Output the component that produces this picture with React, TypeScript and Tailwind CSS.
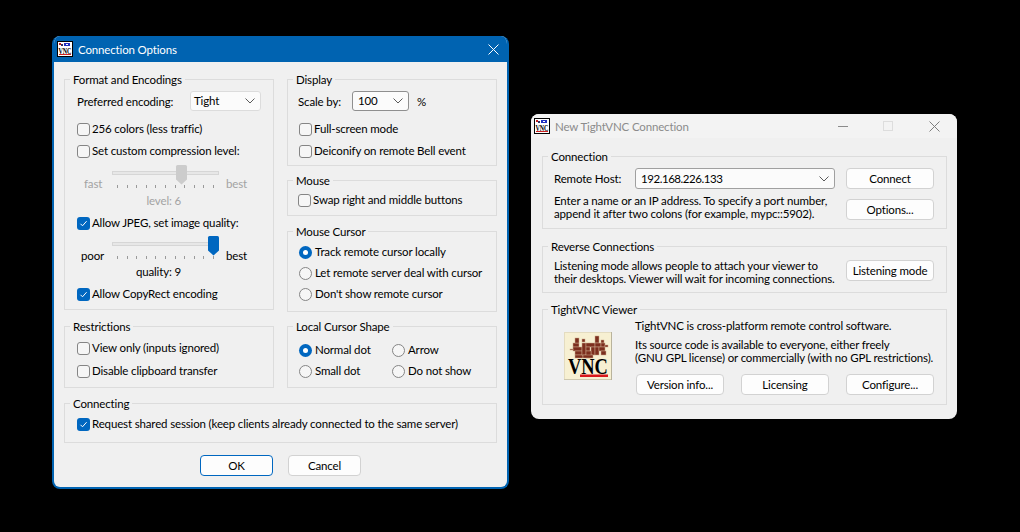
import React from "react";

function Group({ title, className, children }: { title: string; className: string; children?: React.ReactNode }) {
  return (
    <div className={"relative border border-[#dcdcdc] " + className}>
      <span className="absolute -top-[8px] left-[5px] bg-[#f0f0f0] px-[3px] leading-[16px] text-[#000]">{title}</span>
      {children}
    </div>
  );
}

function Check({ label, on, className = "" }: { label: string; on?: boolean; className?: string }) {
  return (
    <div className={"flex h-[20px] items-center gap-[2px] " + className}>
      {on ? (
        <span className="flex h-[13px] w-[13px] shrink-0 items-center justify-center rounded-[3px] bg-[#0067c0]">
          <svg width="9" height="9" viewBox="0 0 9 9" fill="none">
            <path d="M1.5 4.8 3.5 6.8 7.6 2.2" stroke="#ffffff" strokeWidth="1" />
          </svg>
        </span>
      ) : (
        <span className="h-[13px] w-[13px] shrink-0 rounded-[3px] border border-[#858585] bg-[#f6f6f6]" />
      )}
      <span className="whitespace-nowrap">{label}</span>
    </div>
  );
}

function Radio({ label, on, className = "" }: { label: string; on?: boolean; className?: string }) {
  return (
    <div className={"flex h-[20px] items-center gap-[3px] " + className}>
      {on ? (
        <span className="flex h-[13px] w-[13px] shrink-0 items-center justify-center rounded-full bg-[#0067c0]">
          <span className="h-[5px] w-[5px] rounded-full bg-white" />
        </span>
      ) : (
        <span className="h-[13px] w-[13px] shrink-0 rounded-full border border-[#858585] bg-[#f6f6f6]" />
      )}
      <span className="whitespace-nowrap">{label}</span>
    </div>
  );
}

function Chevron() {
  return (
    <svg width="10" height="6" viewBox="0 0 10 6" fill="none" className="shrink-0">
      <path d="M0.5 0.5 5 5 9.5 0.5" stroke="#5a5a5a" strokeWidth="1" />
    </svg>
  );
}

function Btn({ label, className }: { label: string; className: string }) {
  return (
    <div className={"flex shrink-0 items-center justify-center whitespace-nowrap rounded-[4px] border border-[#d2d2d2] bg-[#fdfdfd] " + className}>{label}</div>
  );
}

function Slider({ x, color }: { x: number; color: string }) {
  const ticks = [5, 15, 24, 34, 43, 53, 63, 72, 82, 91, 101];
  return (
    <svg width="107" height="24" viewBox="0 0 107 24" className="shrink-0">
      <rect x="0.5" y="6.5" width="106" height="3" fill="#e7e7e7" stroke="#d6d6d6" />
      {ticks.map((t) => (
        <rect key={t} x={t} y="20" width="1" height="3" fill="#9a9a9a" />
      ))}
      <path d={`M${x - 5.5} 1.5a1.5 1.5 0 0 1 1.5-1.5h8a1.5 1.5 0 0 1 1.5 1.5V14.5L${x} 19.5 ${x - 5.5} 14.5Z`} fill={color} />
    </svg>
  );
}

function SmallIcon() {
  return (
    <svg width="16" height="16" viewBox="0 0 16 16" className="shrink-0">
      <rect x="0" y="0" width="16" height="16" fill="#000" />
      <rect x="1" y="1" width="14" height="14" fill="#fff" />
      <rect x="2" y="2" width="2" height="2" fill="#c02020" />
      <rect x="4" y="3" width="2" height="2" fill="#303060" />
      <rect x="7" y="2" width="6" height="3" fill="#2030c0" />
      <rect x="9" y="3" width="2" height="1" fill="#fff" />
      <text transform="translate(1.5 12.5) scale(0.67 1)" fontFamily="Liberation Serif" fontWeight="700" fontSize="9" fill="#000">VNC</text>
      <rect x="2" y="13" width="12" height="1" fill="#d02020" />
    </svg>
  );
}

function Logo() {
  const bricks: [number, number, number, number][] = [
    [9, 11, 6, 4], [11, 6, 4, 5], [9, 15, 9, 4], [11, 19, 7, 4], [11, 23, 8, 3],
    [18, 7, 3, 3], [18, 11, 4, 12], [22, 11, 9, 4], [22, 15, 4, 4], [27, 15, 4, 8], [22, 19, 5, 7], [19, 23, 10, 3],
    [31, 4, 4, 7], [31, 11, 6, 4], [31, 15, 4, 8], [37, 8, 3, 3], [37, 11, 4, 4], [35, 15, 6, 4], [37, 19, 5, 4], [6, 17, 3, 1], [41, 13, 3, 2],
  ];
  return (
    <svg width="48" height="48" viewBox="0 0 48 48" className="shrink-0">
      <rect x="0" y="0" width="48" height="48" fill="#f7f0d2" />
      <rect x="0.5" y="0.5" width="47" height="47" fill="none" stroke="#e4dcc0" />
      <path d="M47.5 0v48H0" fill="none" stroke="#b9b39c" />
      {bricks.map((b, i) => (
        <rect key={i} x={b[0]} y={b[1]} width={b[2]} height={b[3]} fill="#7c2f1e" stroke="#c9a78a" strokeWidth="0.5" />
      ))}
      <text transform="translate(4 42) scale(0.82 1)" fontFamily="Liberation Serif" fontWeight="700" fontSize="22.5" fill="#000">VNC</text>
      <rect x="16" y="42.5" width="28" height="2.5" fill="#d8181c" />
    </svg>
  );
}

export default function App() {
  return (
    <div className="relative h-[532px] w-[1020px] overflow-hidden bg-black font-['Lato',sans-serif] text-[11.5px] tracking-[-0.15px] text-[#000]">
      {/* Connection Options window */}
      <div className="absolute left-[52px] top-[36px] flex h-[453px] w-[457px] flex-col overflow-hidden rounded-[8px] border-2 border-t-0 border-[#0063b1] bg-[#f0f0f0]">
        <div className="-mx-[2px] flex h-[26px] shrink-0 items-center bg-[#0063b1] pl-[5px] pr-[10px]">
          <SmallIcon />
          <span className="ml-[5px] pt-[1px] text-[#fff]">Connection Options</span>
          <svg width="11" height="11" viewBox="0 0 11 11" className="ml-auto" fill="none">
            <path d="M0.5 0.5 10.5 10.5M10.5 0.5 0.5 10.5" stroke="#ffffff" strokeWidth="1" />
          </svg>
        </div>
        <div className="flex flex-col px-[10px] pt-[17px]">
          <div className="flex gap-[13px]">
            <div className="flex w-[210px] flex-col gap-[16px]">
              <Group title="Format and Encodings" className="flex h-[231px] flex-col pl-[12px] pt-[11px]">
                <div className="flex h-[20px] items-center">
                  <span className="w-[113px] whitespace-nowrap pt-[1px]">Preferred encoding:</span>
                  <div className="flex h-[20px] w-[71px] items-center justify-between rounded-[3px] border border-[#dcdcdc] bg-[#fbfbfb] pl-[3px] pr-[5px]">
                    <span>Tight</span>
                    <Chevron />
                  </div>
                </div>
                <Check label="256 colors (less traffic)" className="mt-[8px]" />
                <Check label="Set custom compression level:" className="mt-[2px]" />
                <div className="mt-[4px] flex h-[24px] text-[#a3a3a3]">
                  <span className="w-[35px] pl-[7px] pt-[9px] leading-[20px]">fast</span>
                  <Slider x={69.5} color="#cccccc" />
                  <span className="ml-[7px] pt-[9px] leading-[20px]">best</span>
                </div>
                <div className="mt-[4px] h-[16px] w-[104px] text-right leading-[16px] text-[#a3a3a3]">level: 6</div>
                <Check on label="Allow JPEG, set image quality:" className="mt-[4px]" />
                <div className="mt-[3px] flex h-[24px]">
                  <span className="w-[35px] pl-[4px] pt-[10px] leading-[20px]">poor</span>
                  <Slider x={101.5} color="#0067c0" />
                  <span className="ml-[7px] pt-[10px] leading-[20px]">best</span>
                </div>
                <div className="mt-[4px] h-[16px] w-[104px] text-right leading-[16px]">quality: 9</div>
                <Check on label="Allow CopyRect encoding" className="mt-[4px]" />
              </Group>
              <Group title="Restrictions" className="flex h-[62px] flex-col pl-[12px] pt-[11px]">
                <Check label="View only (inputs ignored)" />
                <Check label="Disable clipboard transfer" className="mt-[3px]" />
              </Group>
            </div>
            <div className="flex w-[210px] flex-col">
              <Group title="Display" className="flex h-[87px] flex-col pl-[10px] pt-[11px]">
                <div className="flex h-[20px] items-center">
                  <span className="w-[54px] whitespace-nowrap pt-[1px]">Scale by:</span>
                  <div className="flex h-[20px] w-[57px] items-center justify-between rounded-[3px] border border-[#8f8f8f] bg-[#fbfbfb] pl-[5px] pr-[5px]">
                    <span>100</span>
                    <Chevron />
                  </div>
                  <span className="ml-[8px] pt-[1px]">%</span>
                </div>
                <Check label="Full-screen mode" className="ml-[1px] mt-[8px]" />
                <Check label="Deiconify on remote Bell event" className="ml-[1px] mt-[2px]" />
              </Group>
              <Group title="Mouse" className="mt-[14px] flex h-[36px] flex-col pl-[10px] pt-[9px]">
                <Check label="Swap right and middle buttons" />
              </Group>
              <Group title="Mouse Cursor" className="mt-[15px] flex h-[81px] flex-col pl-[11px] pt-[10px]">
                <Radio on label="Track remote cursor locally" />
                <Radio label="Let remote server deal with cursor" className="mt-[1px]" />
                <Radio label="Don't show remote cursor" className="mt-[1px]" />
              </Group>
              <Group title="Local Cursor Shape" className="mt-[14px] grid h-[62px] grid-cols-[93px_1fr] grid-rows-[20px_20px] gap-y-[1px] pl-[11px] pt-[13px]">
                <Radio on label="Normal dot" />
                <Radio label="Arrow" />
                <Radio label="Small dot" />
                <Radio label="Do not show" />
              </Group>
            </div>
          </div>
          <Group title="Connecting" className="mt-[15px] flex h-[40px] w-[433px] flex-col pl-[12px] pt-[10px]">
            <Check on label="Request shared session (keep clients already connected to the same server)" />
          </Group>
          <div className="mt-[12px] flex gap-[15px] pl-[136px]">
            <Btn label="OK" className="h-[21px] w-[73px] !border-[#0067c0]" />
            <Btn label="Cancel" className="h-[21px] w-[73px]" />
          </div>
        </div>
      </div>

      {/* New TightVNC Connection window */}
      <div className="absolute left-[531px] top-[114px] flex h-[305px] w-[426px] flex-col overflow-hidden rounded-[8px] bg-[#f0f0f0]">
        <div className="flex h-[24px] shrink-0 items-center bg-[#f3f3f3] pl-[3px]">
          <SmallIcon />
          <span className="ml-[5px] pt-[1px] text-[#8b8b8b]">New TightVNC Connection</span>
          <div className="ml-auto flex items-center">
            <span className="mr-[35px] h-px w-[10px] bg-[#8b8b8b]" />
            <span className="mr-[36px] h-[10px] w-[10px] border border-[#dddddd]" />
            <svg width="11" height="11" viewBox="0 0 11 11" fill="none" className="mr-[17px]">
              <path d="M0.5 0.5 10.5 10.5M10.5 0.5 0.5 10.5" stroke="#7d7d7d" strokeWidth="1" />
            </svg>
          </div>
        </div>
        <div className="flex flex-col px-[11px] pt-[18px]">
          <Group title="Connection" className="flex h-[73px] w-[405px] pl-[11px] pt-[11px]">
            <div className="flex w-[281px] shrink-0 flex-col">
              <div className="flex h-[21px] items-center">
                <span className="w-[81px] whitespace-nowrap">Remote Host:</span>
                <div className="flex h-[21px] w-[200px] shrink-0 items-center justify-between rounded-[3px] border border-[#a0a0a0] bg-[#fbfbfb] pl-[5px] pr-[5px]">
                  <span className="tracking-[-0.45px]">192.168.226.133</span>
                  <Chevron />
                </div>
              </div>
              <p className="mt-[5px] w-[290px] whitespace-nowrap leading-[13px]">
                Enter a name or an IP address. To specify a port number,
                <br />
                append it after two colons (for example, mypc::5902).
              </p>
            </div>
            <div className="ml-auto mr-[12px] flex flex-col gap-[10px]">
              <Btn label="Connect" className="h-[21px] w-[88px]" />
              <Btn label="Options..." className="h-[21px] w-[88px]" />
            </div>
          </Group>
          <Group title="Reverse Connections" className="mt-[17px] flex h-[47px] w-[405px] items-center pl-[11px]">
            <p className="w-[290px] shrink-0 whitespace-nowrap pt-[4px] leading-[13px]">
              Listening mode allows people to attach your viewer to
              <br />
              their desktops. Viewer will wait for incoming connections.
            </p>
            <Btn label="Listening mode" className="ml-auto mr-[12px] mt-[2px] h-[21px] w-[88px]" />
          </Group>
          <Group title="TightVNC Viewer" className="mt-[16px] flex h-[96px] w-[405px] pl-[21px] pt-[22px]">
            <Logo />
            <div className="-mt-[14px] ml-[23px] flex flex-col">
              <p className="h-[16px] whitespace-nowrap leading-[16px]">TightVNC is cross-platform remote control software.</p>
              <p className="mt-[4px] whitespace-nowrap leading-[13px]">
                Its source code is available to everyone, either freely
                <br />
                (GNU GPL license) or commercially (with no GPL restrictions).
              </p>
              <div className="mt-[10px] flex gap-[17px] pl-[1px]">
                <Btn label="Version info..." className="h-[21px] w-[88px]" />
                <Btn label="Licensing" className="h-[21px] w-[88px]" />
                <Btn label="Configure..." className="h-[21px] w-[88px]" />
              </div>
            </div>
          </Group>
        </div>
      </div>
    </div>
  );
}
